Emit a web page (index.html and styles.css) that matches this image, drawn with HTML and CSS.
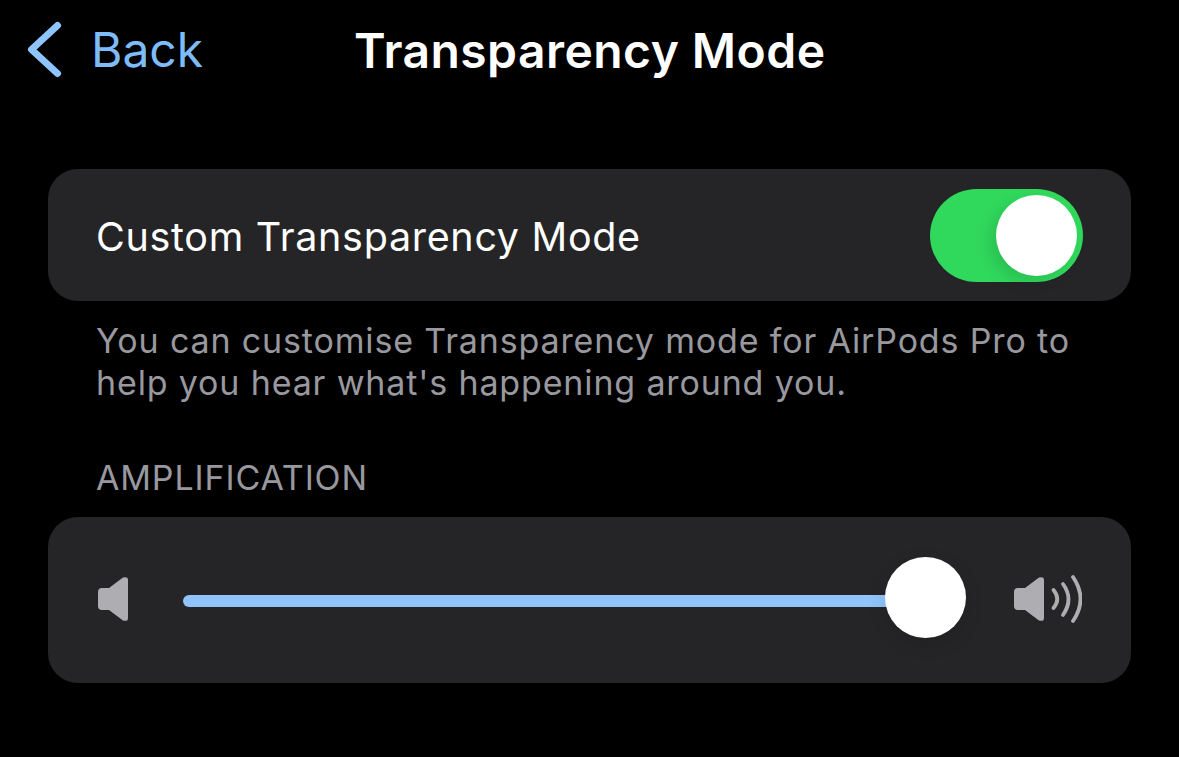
FILE: index.html
```html
<!DOCTYPE html>
<html lang="en">
<head>
<meta charset="utf-8">
<title>Transparency Mode</title>
<link rel="stylesheet" href="styles.css">
</head>
<body>
<header class="nav">
  <div class="back">
    <svg class="chevron" width="36" height="60" viewBox="0 0 36 60"><path d="M31.5 5.5 L5.5 29.5 L31.5 53.5" fill="none" stroke="#8ec5ff" stroke-width="7" stroke-linecap="round" stroke-linejoin="round"/></svg>
    <span class="back-label">Back</span>
  </div>
  <h1 class="title">Transparency Mode</h1>
</header>
<main class="content">
  <section class="card toggle-card">
    <span class="row-label">Custom Transparency Mode</span>
    <div class="switch"><div class="switch-knob"></div></div>
  </section>
  <p class="note">You can customise Transparency mode for AirPods Pro to<br>help you hear what's happening around you.</p>
  <h2 class="section-head">AMPLIFICATION</h2>
  <section class="card slider-card">
    <svg class="vol-low" width="30" height="44" viewBox="0 0 30 44"><path d="M4 11 H11 L25 0.6 Q30 -1 30 3 V41 Q30 45 25 43.4 L11 33 H4 Q0 33 0 29 V15 Q0 11 4 11 Z" fill="#aeaeb2"/></svg>
    <div class="slider">
      <div class="track"></div>
      <div class="slider-knob"></div>
    </div>
    <svg class="vol-high" width="68" height="48" viewBox="0 0 68 48"><path d="M4 13 H11 L25 2.6 Q30 1 30 5 V43 Q30 47 25 45.4 L11 35 H4 Q0 35 0 31 V17 Q0 13 4 13 Z" fill="#aeaeb2"/><g fill="none" stroke="#aeaeb2" stroke-width="3.8" stroke-linecap="round"><path d="M39.5 15 Q47 24 39.5 33"/><path d="M49 9 Q60 24 49 40"/><path d="M59 2 Q74 24 59 46"/></g></svg>
  </section>
</main>
</body>
</html>
```
FILE: styles.css
```css
* { box-sizing: border-box; margin: 0; padding: 0; }
html, body { background: #000; }
body {
  width: 1179px;
  height: 757px;
  overflow: hidden;
  color: #fff;
  font-family: Inter, "Liberation Sans", sans-serif;
}
.nav {
  position: relative;
  height: 169px;
  padding: 20px 0 0 26px;
}
.back {
  display: flex;
  align-items: center;
  gap: 29px;
  height: 60px;
}
.chevron { flex: none; }
.back-label {
  font-size: 48px;
  line-height: 62px;
  color: #7dbcf8;
  font-weight: 400;
}
.title {
  position: absolute;
  left: 354px;
  top: 21px;
  font-size: 48px;
  line-height: 60px;
  font-weight: 600;
  letter-spacing: 0.45px;
  white-space: nowrap;
}
.content { padding: 0 48px; }
.card {
  width: 1083px;
  background: #252527;
  border-radius: 30px;
  display: flex;
  align-items: center;
}
.toggle-card {
  height: 132px;
  padding: 0 48px;
  justify-content: space-between;
}
.row-label {
  font-size: 39.5px;
  font-weight: 400;
  letter-spacing: 0.68px;
  padding-top: 4px;
}
.switch {
  width: 153px;
  height: 93px;
  border-radius: 47px;
  background: #30d95c;
  padding: 6px;
  display: flex;
  justify-content: flex-end;
}
.switch-knob {
  width: 81px;
  height: 81px;
  border-radius: 50%;
  background: #fff;
  box-shadow: -6px 6px 16px rgba(0, 0, 0, 0.12);
}
.note {
  margin: 19px 0 0 48px;
  font-size: 34px;
  line-height: 42px;
  letter-spacing: 0.85px;
  color: #98989e;
}
.section-head {
  margin: 54px 0 0 48px;
  font-size: 34px;
  line-height: 40px;
  font-weight: 400;
  letter-spacing: 0.85px;
  color: #98989e;
}
.slider-card {
  margin-top: 19px;
  height: 166px;
  padding: 0 49px 0 50px;
}
.vol-low { flex: none; margin-top: -2px; }
.slider {
  position: relative;
  flex: none;
  width: 783px;
  height: 81px;
  margin-left: 55px;
  display: flex;
  align-items: center;
}
.track {
  width: 730px;
  height: 12px;
  margin-top: 2px;
  border-radius: 6px;
  background: #90c4fb;
}
.slider-knob {
  position: absolute;
  right: 0;
  top: -3px;
  width: 81px;
  height: 81px;
  border-radius: 50%;
  background: #fff;
  box-shadow: 0 6px 20px rgba(0, 0, 0, 0.1);
}
.vol-high { flex: none; margin-left: 48px; margin-top: -2px; }
```
